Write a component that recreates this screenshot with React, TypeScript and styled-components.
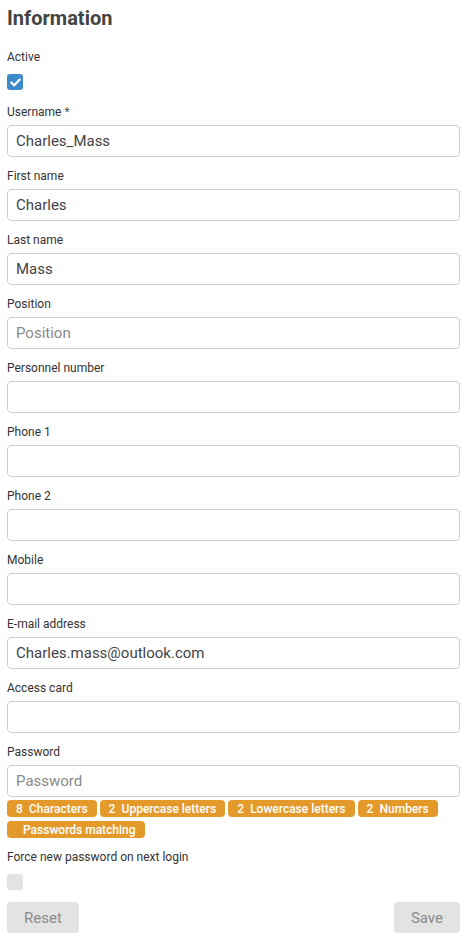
import React from 'react';
import styled, { createGlobalStyle } from 'styled-components';

const GlobalStyle = createGlobalStyle`
  html, body {
    margin: 0;
    padding: 0;
    background: #ffffff;
  }
  body {
    font-family: Roboto, "Liberation Sans", Arial, sans-serif;
    color: #333;
  }
  * {
    box-sizing: border-box;
  }
`;

const Page = styled.div`
  width: 468px;
  padding: 6px 8px 12px 7px;
`;

const Title = styled.h1`
  margin: 0 0 20px;
  font-size: 20px;
  line-height: 24px;
  font-weight: 700;
  color: #444;
`;

const Field = styled.div`
  display: flex;
  flex-direction: column;
  margin-bottom: 12px;
`;

const Label = styled.label`
  font-size: 12px;
  line-height: 14px;
  color: #333;
  margin-bottom: 6px;
`;

const CheckLabel = styled(Label)`
  margin-bottom: 10px;
`;

const Required = styled.span`
  color: #555;
`;

const Input = styled.input`
  height: 32px;
  width: 100%;
  border: 1px solid #cfcfcf;
  border-radius: 4px;
  padding: 0 8px;
  font-family: inherit;
  font-size: 15px;
  color: #444;
  background: #fff;
  outline: none;

  &::placeholder {
    color: #8a8a8a;
  }
`;

const CheckField = styled.div<{ $gap: number }>`
  display: flex;
  flex-direction: column;
  margin-bottom: ${({ $gap }) => $gap}px;
`;

const CheckBox = styled.span<{ $checked?: boolean }>`
  display: flex;
  align-items: center;
  justify-content: center;
  width: 16px;
  height: 16px;
  border-radius: 3px;
  background: ${({ $checked }) => ($checked ? '#3d8bc8' : '#e3e3e3')};
`;

const Badges = styled.div`
  display: flex;
  flex-wrap: wrap;
  gap: 4px 3px;
  margin-top: 3px;
`;

const Badge = styled.span`
  display: inline-flex;
  align-items: center;
  height: 17px;
  padding: 0 9px;
  border-radius: 4px;
  background: #e39a2b;
  color: #fff;
  font-size: 12px;
  font-weight: 500;
  white-space: nowrap;
`;

const Lead = styled.span<{ $empty: boolean }>`
  min-width: 7px;
  margin-right: ${({ $empty }) => ($empty ? 0 : 6)}px;
`;

const Actions = styled.div`
  display: flex;
  justify-content: space-between;
  align-items: center;
`;

const Button = styled.button`
  height: 31px;
  padding: 0 17px;
  border: none;
  border-radius: 4px;
  background: #e3e3e3;
  color: #8a8a8a;
  font-family: inherit;
  font-size: 15px;
  cursor: default;
`;

const fields: { label: string; value?: string; placeholder?: string; required?: boolean }[] = [
  { label: 'Username', value: 'Charles_Mass', required: true },
  { label: 'First name', value: 'Charles' },
  { label: 'Last name', value: 'Mass' },
  { label: 'Position', placeholder: 'Position' },
  { label: 'Personnel number' },
  { label: 'Phone 1' },
  { label: 'Phone 2' },
  { label: 'Mobile' },
  { label: 'E-mail address', value: 'Charles.mass@outlook.com' },
  { label: 'Access card' },
];

const rules = [
  { lead: '8', text: 'Characters' },
  { lead: '2', text: 'Uppercase letters' },
  { lead: '2', text: 'Lowercase letters' },
  { lead: '2', text: 'Numbers' },
  { lead: '', text: 'Passwords matching' },
];

function Check() {
  return (
    <svg width="11" height="9" viewBox="0 0 11 9">
      <path d="M1.3 4.6 L4.2 7.3 L9.7 1.6" fill="none" stroke="#fff" strokeWidth="2.2" strokeLinecap="round" strokeLinejoin="round" />
    </svg>
  );
}

export default function App() {
  return (
    <Page>
      <GlobalStyle />
      <Title>Information</Title>

      <CheckField $gap={15}>
        <CheckLabel>Active</CheckLabel>
        <CheckBox $checked>
          <Check />
        </CheckBox>
      </CheckField>

      {fields.map((f) => (
        <Field key={f.label}>
          <Label>
            {f.label}
            {f.required && <Required> *</Required>}
          </Label>
          <Input defaultValue={f.value} placeholder={f.placeholder} />
        </Field>
      ))}

      <Field>
        <Label>Password</Label>
        <Input type="password" placeholder="Password" />
        <Badges>
          {rules.map((r) => (
            <Badge key={r.text}>
              <Lead $empty={!r.lead}>{r.lead}</Lead>
              {r.text}
            </Badge>
          ))}
        </Badges>
      </Field>

      <CheckField $gap={12}>
        <CheckLabel>Force new password on next login</CheckLabel>
        <CheckBox />
      </CheckField>

      <Actions>
        <Button>Reset</Button>
        <Button>Save</Button>
      </Actions>
    </Page>
  );
}
